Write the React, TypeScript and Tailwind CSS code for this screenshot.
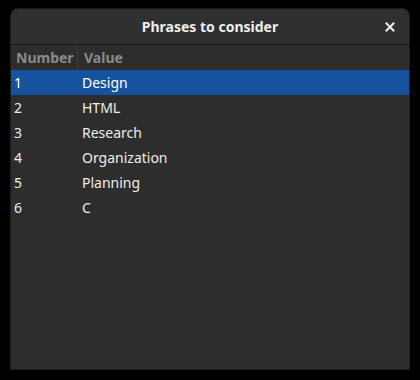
const phrases = ["Design", "HTML", "Research", "Organization", "Planning", "C"];

export default function App() {
  return (
    <div className="h-[380px] w-[420px] bg-black pl-[10px] pt-[8px] font-['Noto_Sans',sans-serif]">
      <div className="flex h-[362px] w-[400px] flex-col overflow-hidden rounded-t-[8px] border border-[#1b1b1b] bg-[#2d2d2d]">
        <div className="relative flex h-[36px] shrink-0 items-center justify-center border-b border-[#1b1b1b] bg-[#303030]">
          <span className="text-[14px] font-bold text-[#eeeeec]">Phrases to consider</span>
          <button className="absolute right-[11px] top-[10px] grid h-4 w-4 place-items-center text-[#eeeeec]" aria-label="Close">
            <svg width="10" height="10" viewBox="0 0 10 10">
              <path d="M1.5 1.5 L8.5 8.5 M8.5 1.5 L1.5 8.5" stroke="currentColor" strokeWidth="2" strokeLinecap="square" />
            </svg>
          </button>
        </div>
        <div className="flex h-[25px] shrink-0 items-center text-[14px] font-bold text-[#8b8b8b]">
          <div className="flex h-full w-[67px] items-center border-r border-[#3a3a3a] pl-[5px]">Number</div>
          <div className="pl-[6px]">Value</div>
        </div>
        <div className="flex flex-col text-[14px] text-[#eeeeec]">
          {phrases.map((p, i) => (
            <div key={p} className={`flex h-[25px] items-center ${i === 0 ? "bg-[#15539e] text-white" : ""}`}>
              <div className="w-[71px] pl-[3px]">{i + 1}</div>
              <div>{p}</div>
            </div>
          ))}
        </div>
      </div>
    </div>
  );
}
